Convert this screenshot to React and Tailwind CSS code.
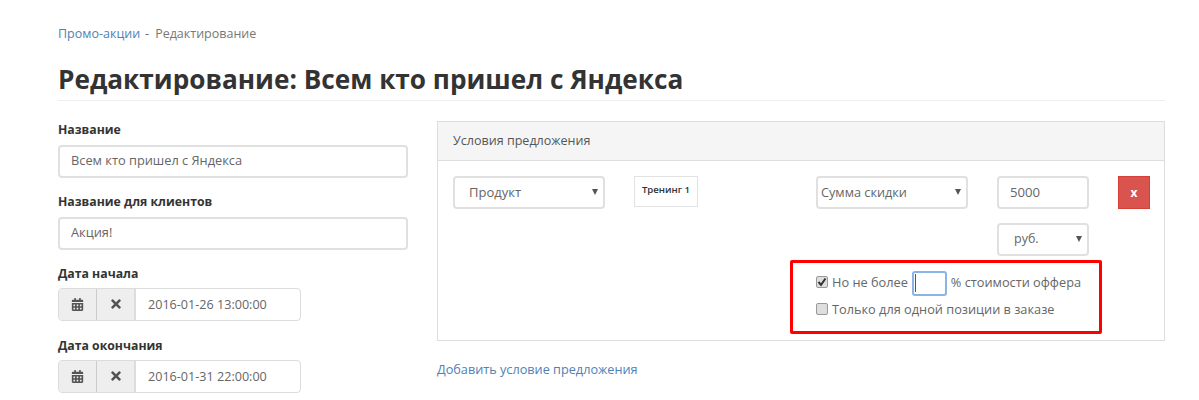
import React from 'react';
import { FaCalendarAlt, FaTimes } from 'react-icons/fa';

const Caret = () => (
  <svg width="6" height="6" viewBox="0 0 6 6" className="text-[#555] mb-[1px]"><path d="M0 0h6L3 6z" fill="currentColor" /></svg>
);

const Field = ({ label, value }) => (
  <div>
    <div className="text-[12.25px] leading-[20px] font-bold text-[#333] mb-[5px]">{label}</div>
    <div className="h-[33px] border-2 border-[#e0e0e0] rounded-[4px] flex items-center pl-[11px] pb-[1px] text-[12.8px] text-[#666]">{value}</div>
  </div>
);

const DateField = ({ label, value, className }) => (
  <div className={className}>
    <div className="text-[12.25px] leading-[20px] font-bold text-[#333] mb-[4px]">{label}</div>
    <div className="w-[243px] h-[33px] border border-[#dcdcdc] rounded-[4px] flex text-[12.6px] text-[#666] overflow-hidden">
      <div className="w-[38px] bg-[#eeeeee] border-r border-[#ccc] flex items-center justify-center text-[#555] pb-[1px]"><FaCalendarAlt size={13} /></div>
      <div className="w-[39px] bg-[#eeeeee] border-r-2 border-[#ddd] flex items-center justify-center text-[#555] pb-[1px]"><FaTimes size={14} /></div>
      <div className="flex-1 flex items-center pl-[12px] pt-[1px]">{value}</div>
    </div>
  </div>
);

const Select = ({ value, className, pad, textSize }) => (
  <div className={`h-[33px] border-2 border-[#e0e0e0] rounded-[4px] flex items-center justify-between pr-[5px] text-[#666] ${textSize} ${pad} ${className}`}>
    <span>{value}</span>
    <Caret />
  </div>
);

const Check = ({ checked }) => (
  <span className="w-[12px] h-[12px] mb-[3px] rounded-[2px] border border-[#999] bg-[#dedede] flex items-center justify-center shrink-0">
    {checked && (
      <svg width="10" height="10" viewBox="0 0 10 10"><path d="M1.5 5l2.5 2.8L8.5 1.5" fill="none" stroke="#333" strokeWidth="2" /></svg>
    )}
  </span>
);

export default function App() {
  return (
    <div className="w-[1199px] h-[400px] overflow-hidden bg-white pl-[58px] pr-[34px] pt-[24px] font-['Open_Sans',sans-serif] text-[#555]">
      <div className="text-[12.5px] leading-[20px] flex">
        <a className="text-[#4f81b3]">Промо-акции</a>
        <span className="text-[#666] ml-[5px]">-</span>
        <span className="text-[#777] ml-[6px]">Редактирование</span>
      </div>

      <h1 className="mt-[16px] text-[26.2px] leading-[39px] font-bold text-[#333] border-b border-[#eeeeee] h-[41px]">Редактирование: Всем кто пришел с Яндекса</h1>

      <div className="mt-[19px] flex gap-[29px] items-start">
        <div className="w-[350px] flex flex-col">
          <Field label="Название" value="Всем кто пришел с Яндекса" />
          <div className="mt-[14px]"><Field label="Название для клиентов" value="Акция!" /></div>
          <DateField className="mt-[14px]" label="Дата начала" value="2016-01-26 13:00:00" />
          <DateField className="mt-[15px]" label="Дата окончания" value="2016-01-31 22:00:00" />
        </div>

        <div className="flex-1 mt-[1px]">
          <div className="border border-[#dddddd] h-[220px]">
            <div className="h-[39px] bg-[#f5f5f5] border-b border-[#dddddd] flex items-center pl-[15px] text-[12.55px] text-[#555]">Условия предложения</div>
            <div className="pl-[15px] pt-[15px] flex">
              <Select value="Продукт" pad="pl-[14px]" textSize="text-[13px]" className="w-[152px]" />
              <div className="ml-[29px] w-[64px] h-[31px] border border-[#e2e2e2] flex items-center justify-center pb-[2px] text-[9.6px] font-semibold text-[#333]">Тренинг 1</div>
              <div className="ml-[118px] w-[273px]">
                <div className="flex">
                  <Select value="Сумма скидки" pad="pl-[3px]" textSize="text-[12.7px]" className="w-[152px]" />
                  <div className="ml-[29px] w-[92px] h-[33px] border-2 border-[#e0e0e0] rounded-[4px] flex items-center pl-[11px] text-[13.2px] text-[#666]">5000</div>
                </div>
                <div className="mt-[14px] ml-[181px] w-[92px]">
                  <Select value="руб." pad="pl-[15px]" textSize="text-[12.5px]" className="w-[92px]" />
                </div>
                <div className="relative mt-[14px] text-[12.75px] text-[#666]">
                  <div className="absolute left-[-26px] top-[-10px] w-[312px] h-[74px] border-[3px] border-[#fe0000] rounded-[2px]" />
                  <div className="flex items-center h-[26px]">
                    <Check checked />
                    <span className="ml-[4px]">Но не более</span>
                    <div className="ml-[4px] w-[35px] h-[25px] border-2 border-[#8ab4e8] rounded-[3px] flex items-center pl-[1px]">
                      <span className="w-px h-[18px] bg-[#555]" />
                    </div>
                    <span className="ml-[4px]">% стоимости оффера</span>
                  </div>
                  <div className="flex items-center mt-[1px] h-[26px]">
                    <Check />
                    <span className="ml-[4px]">Только для одной позиции в заказе</span>
                  </div>
                </div>
              </div>
              <div className="ml-[29px] w-[32px] h-[33px] bg-[#d9534f] border border-[#d43f3a] flex items-center justify-center text-white text-[12px] font-bold">x</div>
            </div>
          </div>
          <a className="block mt-[18px] text-[12.7px] leading-[20px] text-[#4f81b3]">Добавить условие предложения</a>
        </div>
      </div>
    </div>
  );
}
